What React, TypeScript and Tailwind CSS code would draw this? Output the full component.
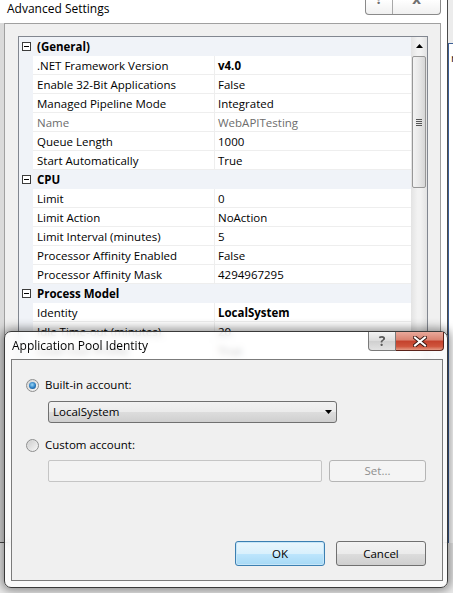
import React from "react";

type Row = { label: string; value: string; bold?: boolean; dim?: boolean };
type Section = { title: string; rows: Row[] };

const sections: Section[] = [
  {
    title: "(General)",
    rows: [
      { label: ".NET Framework Version", value: "v4.0", bold: true },
      { label: "Enable 32-Bit Applications", value: "False" },
      { label: "Managed Pipeline Mode", value: "Integrated" },
      { label: "Name", value: "WebAPITesting", dim: true },
      { label: "Queue Length", value: "1000" },
      { label: "Start Automatically", value: "True" },
    ],
  },
  {
    title: "CPU",
    rows: [
      { label: "Limit", value: "0" },
      { label: "Limit Action", value: "NoAction" },
      { label: "Limit Interval (minutes)", value: "5" },
      { label: "Processor Affinity Enabled", value: "False" },
      { label: "Processor Affinity Mask", value: "4294967295" },
    ],
  },
  {
    title: "Process Model",
    rows: [
      { label: "Identity", value: "LocalSystem", bold: true },
      { label: "Idle Time-out (minutes)", value: "20" },
      { label: "Load User Profile", value: "True" },
      { label: "Maximum Worker Processes", value: "1" },
      { label: "Ping Enabled", value: "True" },
      { label: "Ping Maximum Response Time (seconds)", value: "90" },
      { label: "Ping Period (seconds)", value: "30" },
      { label: "Shutdown Time Limit (seconds)", value: "90" },
      { label: "Startup Time Limit (seconds)", value: "90" },
    ],
  },
];

function MinusBox() {
  return (
    <svg width="9" height="9" viewBox="0 0 9 9" className="shrink-0">
      <rect x="0.5" y="0.5" width="8" height="8" fill="#fff" stroke="#3c3c3c" />
      <line x1="2" y1="4.5" x2="7" y2="4.5" stroke="#000" />
    </svg>
  );
}

function Category({ title }: { title: string }) {
  return (
    <div className="h-[19px] flex items-center bg-[#f0f3f8] pl-[3px] gap-[6px]">
      <MinusBox />
      <span className="font-bold">{title}</span>
    </div>
  );
}

function PropRow({ row }: { row: Row }) {
  return (
    <div className="h-[19px] flex bg-[#f0f3f8]">
      <div className="w-[14px] shrink-0" />
      <div
        className={
          "w-[182px] shrink-0 bg-white border-b border-r border-[#eeeeee] pl-[4px] pt-[2px] flex items-center whitespace-nowrap overflow-hidden " +
          (row.dim ? "text-[#6d6d6d]" : "text-black")
        }
      >
        {row.label}
      </div>
      <div
        className={
          "flex-1 bg-white border-b border-[#eeeeee] pl-[3px] pt-[2px] flex items-center whitespace-nowrap overflow-hidden " +
          (row.bold ? "font-bold " : "") +
          (row.dim ? "text-[#6d6d6d]" : "text-black")
        }
      >
        {row.value}
      </div>
    </div>
  );
}

function Scrollbar() {
  return (
    <div className="w-[16px] shrink-0 flex flex-col bg-[linear-gradient(90deg,#e3e3e3,#f2f2f2_40%,#f2f2f2_60%,#e3e3e3)]">
      <div className="h-[18px] flex items-center justify-center">
        <svg width="7" height="4" viewBox="0 0 7 4">
          <polygon points="3.5,0 7,4 0,4" fill="#000" />
        </svg>
      </div>
      <div className="mx-[1px] mt-[1px] h-[132px] rounded-[2px] border border-[#979797] bg-[linear-gradient(90deg,#f3f3f3,#e8e8e8_50%,#d6d6d6)] flex items-center justify-center">
        <div className="flex flex-col gap-[1px]">
          <div className="w-[6px] h-[1px] bg-[#555]" />
          <div className="w-[6px] h-[1px] bg-[#555]" />
          <div className="w-[6px] h-[1px] bg-[#555]" />
          <div className="w-[6px] h-[1px] bg-[#555]" />
        </div>
      </div>
    </div>
  );
}

function Radio({ checked }: { checked?: boolean }) {
  return (
    <div className="w-[13px] h-[13px] shrink-0 rounded-full border border-[#8e8f8f] bg-[linear-gradient(135deg,#d4d4d4,#f6f6f6)] flex items-center justify-center">
      {checked ? (
        <div className="w-[7px] h-[7px] rounded-full bg-[radial-gradient(circle_at_45%_40%,#9ad8f8,#2a7cc0_55%,#0b3f72)]" />
      ) : (
        <div className="w-[9px] h-[9px] rounded-full bg-[linear-gradient(135deg,#cfcfcf,#f4f4f4)]" />
      )}
    </div>
  );
}

function XGlyph() {
  return (
    <svg width="14" height="11" viewBox="0 0 14 11">
      <path d="M2 1.5 L12 9.5 M12 1.5 L2 9.5" stroke="#3a1a14" strokeWidth="4" strokeLinecap="square" />
      <path d="M2 1.5 L12 9.5 M12 1.5 L2 9.5" stroke="#fff" strokeWidth="2" strokeLinecap="square" />
    </svg>
  );
}

export default function App() {
  return (
    <div className="relative w-[453px] h-[593px] overflow-hidden bg-[#ececec] text-[11.5px] leading-none text-black font-['Open_Sans',sans-serif]">
      {/* Background window: Advanced Settings */}
      <div className="w-[448px] h-[543px] flex flex-col bg-white border-r border-b border-[#4a4a4a]">
        <div className="h-[23px] shrink-0 flex justify-between items-start">
          <span className="pl-[7px] pt-[3px] text-[12px]">Advanced Settings</span>
          <div className="mr-[6px] flex h-[15px] border border-t-0 border-[#8a8a8a] rounded-b-[4px] bg-[linear-gradient(#ffffff,#f0f0f0)] overflow-hidden">
            <div className="w-[27px] border-r border-[#a8a8a8] flex justify-center overflow-hidden">
              <span className="text-[14px] font-bold text-[#707070] -mt-[8px]">?</span>
            </div>
            <div className="w-[47px] flex justify-center overflow-hidden">
              <span className="text-[15px] font-bold text-[#707070] -mt-[9px]">x</span>
            </div>
          </div>
        </div>
        <div className="flex-1 flex min-h-0">
          <div className="w-[4px] shrink-0 bg-[#dadada]" />
          <div className="w-[437px] shrink-0 flex flex-col bg-[#f0f0f0] border-t border-l border-r border-[#a0a0a0] pt-[12px] pl-[13px] pr-[12px]">
            <div className="flex-1 min-h-0 flex border border-[#828790] bg-white overflow-hidden">
              <div className="flex-1 flex flex-col">
                {sections.map((s) => (
                  <React.Fragment key={s.title}>
                    <Category title={s.title} />
                    {s.rows.map((r) => (
                      <PropRow key={r.label} row={r} />
                    ))}
                  </React.Fragment>
                ))}
              </div>
              <Scrollbar />
            </div>
          </div>
          <div className="flex-1 bg-white" />
        </div>
      </div>

      {/* sliver of another window on the right */}
      <div className="absolute left-[448px] top-[43px] w-[12px] h-[500px] border-t border-l border-[#3d5f95] bg-white pt-[8px] pl-[2px] text-[#222]">
        r
      </div>

      {/* Dialog: Application Pool Identity */}
      <div className="absolute left-[4px] top-[331px] w-[444px] h-[257px] rounded-[7px] border border-[#3a3a3a] bg-white/75 backdrop-blur-[3px] shadow-[0_0_10px_3px_rgba(0,0,0,0.4)] flex flex-col">
        <div className="h-[27px] shrink-0 flex justify-between items-start">
          <span className="pl-[7px] pt-[8px] text-[12px]">Application Pool Identity</span>
          <div className="mr-[3px] flex h-[19px]">
            <div className="w-[28px] border border-t-0 border-[#7a7a7a] rounded-bl-[4px] bg-[linear-gradient(#f4f4f4,#dcdcdc_50%,#cfcfcf_50%,#e2e2e2)] flex items-center justify-center">
              <span className="text-[14px] text-[#5a5a5a] font-bold [text-shadow:0_0_1px_#fff]">?</span>
            </div>
            <div className="w-[48px] border border-l-0 border-t-0 border-[#5b2219] rounded-br-[4px] bg-[linear-gradient(#e9a99b,#d98270_45%,#c4412c_50%,#cf553d_80%,#e49a84)] flex items-center justify-center">
              <XGlyph />
            </div>
          </div>
        </div>
        <div className="h-[222px] shrink-0 ml-[6px] mr-[4px] border border-[#7b7b7b] bg-[#f0f0f0] flex flex-col pl-[14px] pr-[16px] pt-[17px]">
          <div className="h-[16px] flex items-center gap-[6px]">
            <Radio checked />
            <span>Built-in account:</span>
          </div>
          <div className="ml-[22px] mt-[8px] w-[289px] h-[22px] rounded-[3px] border border-[#707070] bg-[linear-gradient(#f2f2f2,#ebebeb_50%,#dddddd_50%,#cfcfcf)] flex items-center justify-between pl-[4px] pr-[4px]">
            <span>LocalSystem</span>
            <svg width="7" height="4" viewBox="0 0 7 4">
              <polygon points="0,0 7,0 3.5,4" fill="#000" />
            </svg>
          </div>
          <div className="mt-[14px] h-[16px] flex items-center gap-[6px]">
            <Radio />
            <span>Custom account:</span>
          </div>
          <div className="ml-[22px] mt-[7px] flex gap-[7px]">
            <div className="w-[274px] h-[22px] rounded-[2px] border border-[#c5c5c5] bg-[#f3f3f3]" />
            <div className="w-[97px] h-[22px] rounded-[3px] border border-[#b5b5b5] bg-[#f4f4f4] flex items-center justify-center text-[#8f8f8f]">
              Set...
            </div>
          </div>
          <div className="mt-[59px] flex justify-end gap-[11px]">
            <div className="w-[90px] h-[25px] rounded-[3px] border border-[#3c7fb1] bg-[linear-gradient(#eaf6fd,#d9f0fc_50%,#bee6fd_50%,#a7d9f5)] shadow-[inset_0_0_0_1px_#c6e6f8] flex items-center justify-center">
              OK
            </div>
            <div className="w-[90px] h-[25px] rounded-[3px] border border-[#707070] bg-[linear-gradient(#f2f2f2,#ebebeb_50%,#dddddd_50%,#cfcfcf)] flex items-center justify-center">
              Cancel
            </div>
          </div>
        </div>
      </div>
    </div>
  );
}
